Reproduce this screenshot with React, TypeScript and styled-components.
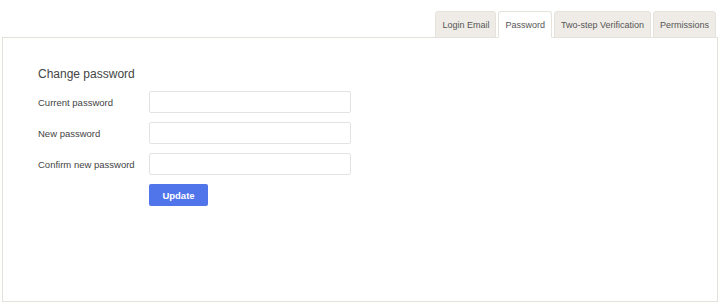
import styled, { createGlobalStyle } from 'styled-components'

const GlobalStyle = createGlobalStyle`
  html, body {
    margin: 0;
    padding: 0;
    background: #ffffff;
  }
  body {
    font-family: "Liberation Sans", Arial, sans-serif;
    color: #3a3a3a;
  }
`

const tabs = ['Login Email', 'Password', 'Two-step Verification', 'Permissions']

const fields = ['Current password', 'New password', 'Confirm new password']

function App() {
  const active = 'Password'
  return (
    <>
      <GlobalStyle />
      <Page>
        <TabBar>
          {tabs.map((t) => (
            <Tab key={t} $active={t === active}>{t}</Tab>
          ))}
        </TabBar>
        <Panel>
          <Heading>Change password</Heading>
          <Form>
            {fields.map((f) => (
              <Row key={f}>
                <Label>{f}</Label>
                <Input type="password" />
              </Row>
            ))}
            <Row>
              <span />
              <Button>Update</Button>
            </Row>
          </Form>
        </Panel>
      </Page>
    </>
  )
}

const Page = styled.div`
  display: flex;
  flex-direction: column;
  padding: 11px 2px 0 2px;
  height: 307px;
  box-sizing: border-box;
`
const TabBar = styled.div`
  display: flex;
  justify-content: flex-end;
  gap: 2px;
  padding-right: 2px;
  margin-bottom: -1px;
  position: relative;
  z-index: 1;
`
const Tab = styled.div<{ $active: boolean }>`
  height: 27px;
  box-sizing: border-box;
  padding: 0 6px;
  display: flex;
  align-items: center;
  font-size: 9px;
  color: #555;
  background: ${(p) => (p.$active ? '#ffffff' : '#efece7')};
  border: 1px solid #e6e3dc;
  border-bottom-color: ${(p) => (p.$active ? '#ffffff' : '#e6e3dc')};
  border-radius: 3px 3px 0 0;
`
const Panel = styled.div`
  height: 265px;
  box-sizing: border-box;
  border: 1px solid #e4e1da;
  padding: 29px 35px;
`
const Heading = styled.h2`
  margin: 0 0 10px 0;
  font-size: 12px;
  font-weight: normal;
  color: #444;
`
const Form = styled.div`
  display: grid;
  grid-template-columns: 111px 202px;
  row-gap: 9px;
`
const Row = styled.div`
  display: contents;
`
const Label = styled.label`
  font-size: 9.5px;
  color: #444;
  align-self: center;
`
const Input = styled.input`
  height: 22px;
  box-sizing: border-box;
  border: 1px solid #e3e3e3;
  border-radius: 2px;
  background: #fff;
`
const Button = styled.button`
  width: 59px;
  height: 22px;
  border: none;
  border-radius: 2px;
  background: #5074ea;
  color: #fff;
  font-family: "Liberation Sans", Arial, sans-serif;
  font-weight: bold;
  font-size: 9.5px;
`

export default App
